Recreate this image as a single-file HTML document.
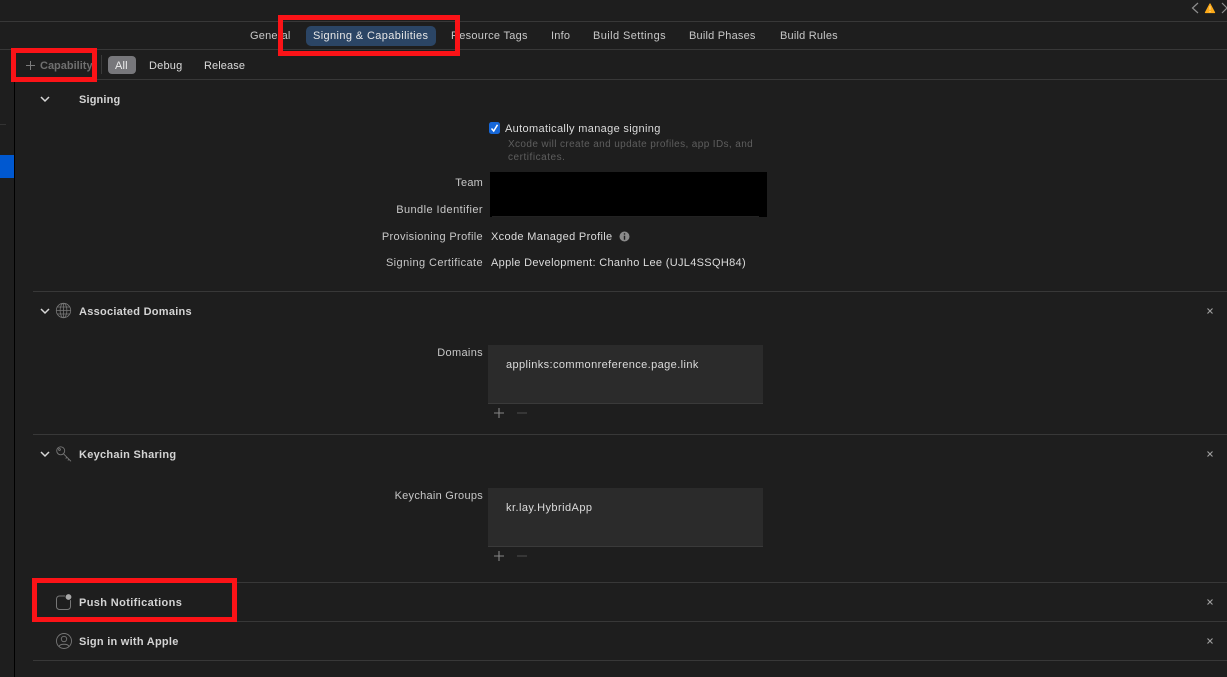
<!DOCTYPE html>
<html><head><meta charset="utf-8"><style>
html,body{margin:0;padding:0;background:#1e1e1e;}
#p{position:relative;width:1227px;height:677px;overflow:hidden;background:#1e1e1e;font-family:"Liberation Sans",sans-serif;font-size:11px;color:#dcdcdc;filter:blur(.3px);}
#p div{position:absolute;}
.t{white-space:nowrap;line-height:14px;height:14px;letter-spacing:.2px;margin-top:1px;}
.l{right:744px;text-align:right;color:#c8c8c8;}
.b{font-weight:bold;color:#d4d4d4;left:79px;letter-spacing:.26px;}
.h{height:1px;background:#383838;}
svg{position:absolute;overflow:visible;}
.r{border:5px solid #fb1317;box-sizing:border-box;}
.box{background:#2b2b2b;left:488px;width:275px;height:59px;border-bottom:1px solid #3a3a3a;box-sizing:border-box;}
</style></head><body><div id="p">
<div class="h" style="left:0;top:21px;width:1227px"></div>
<div class="h" style="left:0;top:49px;width:1227px"></div>
<div class="h" style="left:16px;top:79px;width:1211px"></div>
<div style="left:14px;top:81px;width:1px;height:596px;background:#000"></div>
<div style="left:0;top:124px;width:6px;height:1px;background:#333"></div>
<div style="left:0;top:155px;width:14px;height:23px;background:#0058d0"></div>
<div style="left:101px;top:55px;width:1px;height:19px;background:#3a3a3a"></div>

<svg style="left:1190px;top:1px" width="37" height="14" fill="none"><path d="M8 2L2.500 7L8 12" stroke="#8e8e8e" stroke-width="1.200"/><path d="M15.500 11.500L20 3L24.500 11.500Z" fill="#fdaa18" stroke="#fdaa18" stroke-linejoin="round" stroke-width="1.300"/><path d="M20 5.200V8.800M20 10V11.200" stroke="#f6e6c2" stroke-width=".9"/><path d="M32 2L37 7L32 12" stroke="#8e8e8e" stroke-width="1.200"/></svg>

<div class="t" style="left:250px;top:28px;color:#c8c8c8">General</div>
<div style="left:306px;top:26px;width:130px;height:20px;border-radius:5px;background:#2b4565"></div>
<div class="t" style="left:313px;top:28px;color:#e8e8e8;letter-spacing:.38px">Signing &amp; Capabilities</div>
<div class="t" style="left:451px;top:28px;color:#c8c8c8;letter-spacing:.28px">Resource Tags</div>
<div class="t" style="left:551px;top:28px;color:#c8c8c8">Info</div>
<div class="t" style="left:593px;top:28px;color:#c8c8c8;letter-spacing:.41px">Build Settings</div>
<div class="t" style="left:689px;top:28px;color:#c8c8c8">Build Phases</div>
<div class="t" style="left:780px;top:28px;color:#c8c8c8">Build Rules</div>

<svg style="left:26px;top:61px" width="9" height="9" fill="none"><path d="M4.500 0V9M0 4.500H9" stroke="#7c7c7c"/></svg>
<div class="t" style="left:40px;top:58px;color:#6f6f6f;font-weight:bold;letter-spacing:0">Capability</div>
<div style="left:108px;top:56px;width:28px;height:18px;border-radius:4px;background:#77777b"></div>
<div class="t" style="left:115px;top:58px;color:#eee">All</div>
<div class="t" style="left:149px;top:58px">Debug</div>
<div class="t" style="left:204px;top:58px;letter-spacing:.1px">Release</div>

<svg style="left:40px;top:96px" width="10" height="7" fill="none"><path d="M1 1L5 5L9 1" stroke="#d8d8d8" stroke-width="1.500"/></svg>
<div class="t b" style="top:92px;letter-spacing:.15px">Signing</div>

<div style="left:489px;top:122px;width:11px;height:12px;border-radius:2.500px;background:#1667d8"></div>
<svg style="left:489px;top:122px" width="11" height="12" fill="none"><path d="M2.500 6.500L4.700 9L8.500 2.800" stroke="#fff" stroke-width="1.500"/></svg>
<div class="t" style="left:505px;top:121px;letter-spacing:.34px">Automatically manage signing</div>
<div class="t" style="left:508px;top:136.500px;color:#5e5e5e;font-size:10px;letter-spacing:.38px">Xcode will create and update profiles, app IDs, and</div>
<div class="t" style="left:508px;top:149.500px;color:#5e5e5e;font-size:10px;letter-spacing:.53px">certificates.</div>

<div class="t l" style="top:175px">Team</div>
<div class="t l" style="top:202px;letter-spacing:.43px">Bundle Identifier</div>
<div class="t l" style="top:229px;letter-spacing:.35px">Provisioning Profile</div>
<div class="t l" style="top:255px;letter-spacing:.41px">Signing Certificate</div>
<div style="left:489.500px;top:172px;width:277.500px;height:45px;background:#000"></div>
<div style="left:492px;top:216px;width:267px;height:1px;background:#222"></div>
<div class="t" style="left:491px;top:229px;letter-spacing:.34px">Xcode Managed Profile</div>
<svg style="left:619px;top:231px" width="11" height="11"><circle cx="5.500" cy="5.500" r="5" fill="#8a8a8a"/><path d="M5.500 2.200V3.600M5.500 4.800V8.800" stroke="#1e1e1e" stroke-width="1.400"/></svg>
<div class="t" style="left:491px;top:255px;letter-spacing:.32px">Apple Development: Chanho Lee (UJL4SSQH84)</div>

<div class="h" style="left:33px;top:291px;width:1194px"></div>
<svg style="left:40px;top:308px" width="10" height="7" fill="none"><path d="M1 1L5 5L9 1" stroke="#d8d8d8" stroke-width="1.500"/></svg>
<svg style="left:56px;top:303px" width="16" height="16" fill="none" stroke="#777" stroke-width=".8"><circle cx="7.500" cy="7.500" r="7.200"/><ellipse cx="7.500" cy="7.500" rx="3.400" ry="7.200"/><path d="M7.500 .3V14.700M.3 7.500H14.700M1.300 4H13.700M1.300 11H13.700"/></svg>
<div class="t b" style="top:304px">Associated Domains</div>
<svg style="left:1206px;top:307px" width="8" height="8" fill="none"><path d="M1.500 1.500L6.500 6.500M6.500 1.500L1.500 6.500" stroke="#a0a0a0" stroke-width="1.100"/></svg>
<div class="t l" style="top:345px;letter-spacing:.34px">Domains</div>
<div class="box" style="top:345px"></div>
<div class="t" style="left:506px;top:357px;letter-spacing:.4px">applinks:commonreference.page.link</div>
<svg style="left:494px;top:408px" width="34" height="10" fill="none"><path d="M5 0V10M0 5H10" stroke="#858585" stroke-width="1.100"/><path d="M23 5H33" stroke="#4a4a4a" stroke-width="1.100"/></svg>

<div class="h" style="left:33px;top:434px;width:1194px"></div>
<svg style="left:40px;top:451px" width="10" height="7" fill="none"><path d="M1 1L5 5L9 1" stroke="#d8d8d8" stroke-width="1.500"/></svg>
<svg style="left:56px;top:446px" width="16" height="16" fill="none" stroke="#777" stroke-width=".9"><circle cx="4.700" cy="4.800" r="4"/><circle cx="3.500" cy="3.500" r=".9"/><path d="M7.500 7.800L15 15.300M11 11.200L9.700 12.500M13 13.200L11.800 14.400"/></svg>
<div class="t b" style="top:447px;letter-spacing:.28px">Keychain Sharing</div>
<svg style="left:1206px;top:450px" width="8" height="8" fill="none"><path d="M1.500 1.500L6.500 6.500M6.500 1.500L1.500 6.500" stroke="#a0a0a0" stroke-width="1.100"/></svg>
<div class="t l" style="top:488px;letter-spacing:.27px">Keychain Groups</div>
<div class="box" style="top:488px"></div>
<div class="t" style="left:506px;top:500px;letter-spacing:.45px">kr.lay.HybridApp</div>
<svg style="left:494px;top:551px" width="34" height="10" fill="none"><path d="M5 0V10M0 5H10" stroke="#858585" stroke-width="1.100"/><path d="M23 5H33" stroke="#4a4a4a" stroke-width="1.100"/></svg>

<div class="h" style="left:33px;top:582px;width:1194px"></div>
<svg style="left:56px;top:594px" width="16" height="16" fill="none"><rect x=".5" y="2" width="14" height="13.500" rx="3" stroke="#777"/><circle cx="12.500" cy="3" r="3.300" fill="#a8a8a8" stroke="#1e1e1e" stroke-width=".8"/></svg>
<div class="t b" style="top:595px;letter-spacing:.37px">Push Notifications</div>
<svg style="left:1206px;top:598px" width="8" height="8" fill="none"><path d="M1.500 1.500L6.500 6.500M6.500 1.500L1.500 6.500" stroke="#a0a0a0" stroke-width="1.100"/></svg>

<div class="h" style="left:33px;top:621px;width:1194px"></div>
<svg style="left:56px;top:633px" width="16" height="16" fill="none" stroke="#777" stroke-width=".9"><circle cx="8" cy="8" r="7.500"/><circle cx="8" cy="6" r="2.700"/><path d="M3 13.500C4 10.500 12 10.500 13 13.500"/></svg>
<div class="t b" style="top:634px">Sign in with Apple</div>
<svg style="left:1206px;top:637px" width="8" height="8" fill="none"><path d="M1.500 1.500L6.500 6.500M6.500 1.500L1.500 6.500" stroke="#a0a0a0" stroke-width="1.100"/></svg>
<div class="h" style="left:33px;top:660px;width:1194px"></div>

<div class="r" style="left:278px;top:15px;width:182px;height:41px"></div>
<div class="r" style="left:11px;top:48px;width:86px;height:34px"></div>
<div class="r" style="left:32px;top:578px;width:205px;height:44px"></div>
</div></body></html>
